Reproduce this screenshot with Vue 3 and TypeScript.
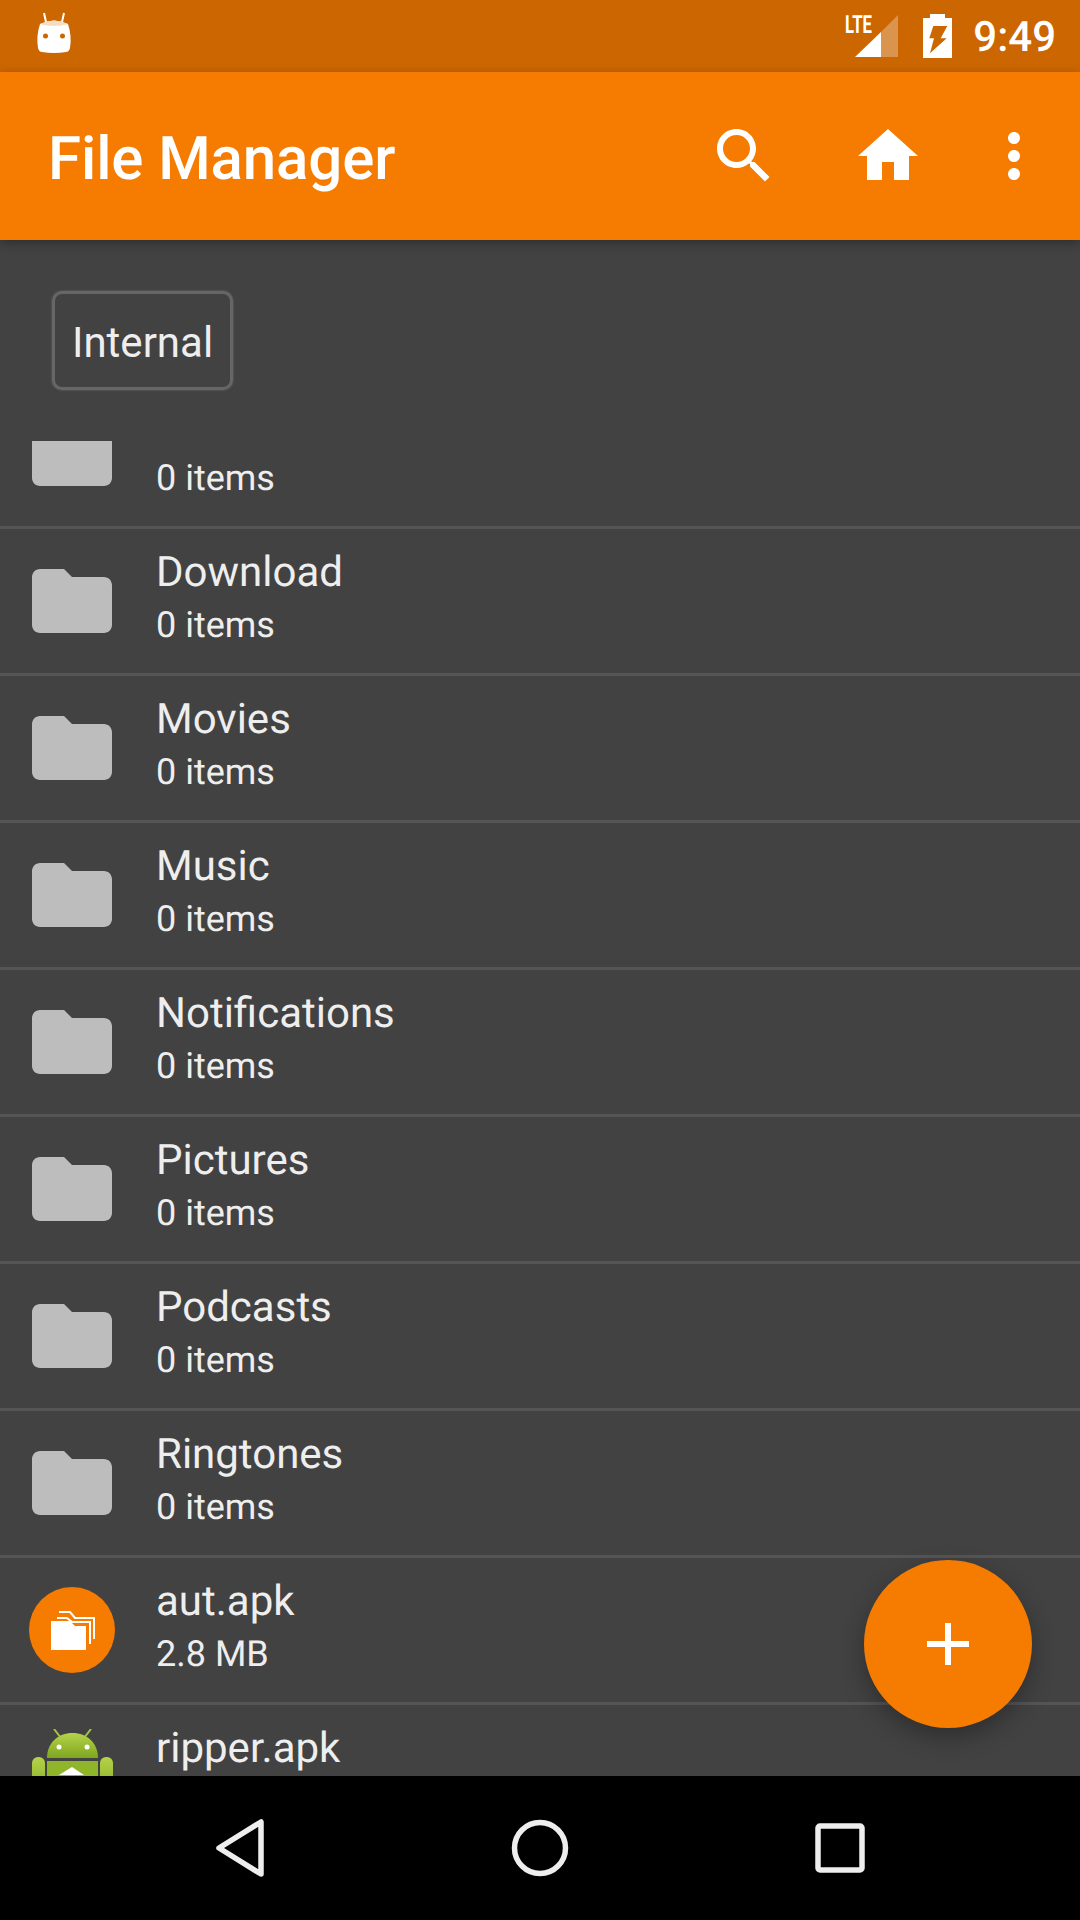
<script setup lang="ts">
interface Entry {
  name: string;
  info: string;
  kind: "folder" | "aut" | "android";
}

const folders = ["Alarms", "Download", "Movies", "Music", "Notifications", "Pictures", "Podcasts", "Ringtones"];

const entries: Entry[] = [
  ...folders.map((name): Entry => ({ name, info: "0 items", kind: "folder" })),
  { name: "aut.apk", info: "2.8 MB", kind: "aut" },
  { name: "ripper.apk", info: "", kind: "android" },
];
</script>

<template>
  <div class="phone">
    <!-- Status bar -->
    <header class="status-bar">
      <svg class="cat" width="36" height="72" viewBox="36 0 36 72">
        <path d="M44 13 46 22M64 13 62 22" stroke="#fff" stroke-width="2" fill="none" />
        <path d="M40 24Q54 17 68 24Q72 36 70 48Q69 52 66 52Q54 54 42 52Q39 52 38 48Q36 36 40 24Z" fill="#fff" />
        <path d="M40 24Q54 17 68 24Q54 28 40 24Z" fill="#f5dcc4" />
        <circle cx="45.5" cy="36" r="2.5" fill="#cc6600" />
        <circle cx="62.5" cy="36" r="2.5" fill="#cc6600" />
      </svg>
      <span class="status-spacer"></span>
      <svg class="signal" width="53" height="72" viewBox="845 0 53 72">
        <text x="845" y="33" class="lte" textLength="27" lengthAdjust="spacingAndGlyphs">LTE</text>
        <path d="M855 57 881 32V57Z" fill="#fff" />
        <path d="M881 32 898 15V57H881Z" fill="#fff" fill-opacity="0.3" />
      </svg>
      <svg class="battery" width="29" height="44" viewBox="0 0 29 44">
        <path
          fill="#fff"
          fill-rule="evenodd"
          d="M7 0H22V4H29V44H0V4H7ZM10.3 12H24.3L17.7 24.3H23.7L7 39.3 11 24.3H6.3Z"
        />
      </svg>
      <span class="clock">9:49</span>
    </header>

    <!-- Toolbar -->
    <div class="toolbar">
      <h1 class="title">File Manager</h1>
      <svg class="tool search" width="72" height="72" viewBox="0 0 24 24">
        <path
          d="M15.5 14h-.79l-.28-.27C15.41 12.59 16 11.11 16 9.5 16 5.91 13.09 3 9.5 3S3 5.91 3 9.5 5.91 16 9.5 16c1.61 0 3.09-.59 4.23-1.57l.27.28v.79l5 4.99L20.49 19l-4.99-5zm-6 0C7.01 14 5 11.99 5 9.5S7.01 5 9.5 5 14 7.01 14 9.5 11.99 14 9.5 14z"
        />
      </svg>
      <svg class="tool home" width="72" height="72" viewBox="0 0 24 24">
        <path d="M10 20v-6h4v6h5v-8h3L12 3 2 12h3v8z" />
      </svg>
      <svg class="tool more" width="72" height="72" viewBox="0 0 24 24">
        <path
          d="M12 8c1.1 0 2-.9 2-2s-.9-2-2-2-2 .9-2 2 .9 2 2 2zm0 2c-1.1 0-2 .9-2 2s.9 2 2 2 2-.9 2-2-.9-2-2-2zm0 6c-1.1 0-2 .9-2 2s.9 2 2 2 2-.9 2-2-.9-2-2-2z"
        />
      </svg>
    </div>

    <main class="content">
      <div class="crumbs">
        <button class="crumb">Internal</button>
      </div>

      <div class="list">
        <div class="list-inner">
          <div v-for="entry in entries" :key="entry.name" class="row">
            <svg v-if="entry.kind === 'folder'" class="thumb" width="96" height="96" viewBox="0 0 24 24">
              <path
                fill="#bdbdbd"
                d="M10 4H4c-1.1 0-2 .9-2 2v12c0 1.1.9 2 2 2h16c1.1 0 2-.9 2-2V8c0-1.1-.9-2-2-2h-8l-2-2z"
              />
            </svg>

            <svg v-else-if="entry.kind === 'aut'" class="thumb" width="96" height="96" viewBox="24 1582 96 96">
              <circle cx="72" cy="1630" r="43" fill="#f57c00" />
              <path d="M51 1621H70L75 1626H86V1650H51Z" fill="#fff" />
              <path d="M57 1618H67L72 1622H90V1644" fill="none" stroke="#fff" stroke-width="2" />
              <path d="M59 1612H70L75 1618H94V1639" fill="none" stroke="#fff" stroke-width="2" />
            </svg>

            <svg v-else class="thumb" width="96" height="96" viewBox="0 0 96 96">
              <defs>
                <linearGradient id="droid" x1="0" y1="0" x2="0" y2="1">
                  <stop offset="0" stop-color="#b5d34a" />
                  <stop offset="1" stop-color="#7fa61f" />
                </linearGradient>
              </defs>
              <path d="M30 0 37 9M67 0 60 9" stroke="#a4c639" stroke-width="2" />
              <path d="M23 29C23 14 34 4 48.5 4S74 14 74 29Z" fill="url(#droid)" />
              <circle cx="35" cy="18" r="2.5" fill="#fff" />
              <circle cx="63" cy="18" r="2.5" fill="#fff" />
              <rect x="8" y="28" width="13" height="40" rx="6" fill="url(#droid)" />
              <rect x="76" y="28" width="13" height="40" rx="6" fill="url(#droid)" />
              <rect x="23" y="32" width="51" height="40" fill="#8fb52b" />
              <path d="M48 38 60 46H35Z" fill="#fff" />
            </svg>

            <div class="text">
              <div class="name">{{ entry.name }}</div>
              <div class="info">{{ entry.info }}</div>
            </div>
          </div>
        </div>
      </div>

      <button class="fab">
        <svg width="42" height="42" viewBox="0 0 42 42">
          <path d="M18 0H24V18H42V24H24V42H18V24H0V18H18Z" fill="#fff" />
        </svg>
      </button>
    </main>

    <!-- Navigation bar -->
    <nav class="nav-bar">
      <svg width="144" height="72" viewBox="0 0 144 72">
        <path d="M93 10V62L51 36Z" class="nav-shape" />
      </svg>
      <svg width="144" height="72" viewBox="0 0 144 72">
        <circle cx="72" cy="36" r="25.5" class="nav-shape" />
      </svg>
      <svg width="144" height="72" viewBox="0 0 144 72">
        <rect x="50" y="14" width="44" height="44" rx="2" class="nav-shape" />
      </svg>
    </nav>
  </div>
</template>

<style scoped>
.phone {
  width: 1080px;
  height: 1920px;
  display: flex;
  flex-direction: column;
  background: #424242;
  font-family: Roboto, "Noto Sans", sans-serif;
  text-rendering: geometricPrecision;
  overflow: hidden;
}

.status-bar {
  height: 72px;
  flex: none;
  display: flex;
  align-items: center;
  padding: 0 24px 0 36px;
  background: #cc6600;
  box-sizing: border-box;
}

.status-spacer {
  flex: 1;
}

.lte {
  font-family: Roboto, sans-serif;
  font-size: 25px;
  font-weight: 700;
  fill: #fff;
}

.battery {
  margin-left: 25px;
}

.clock {
  margin-left: 21px;
  padding-top: 2px;
  color: #fff;
  font-size: 42px;
  font-weight: 500;
}

.toolbar {
  height: 168px;
  flex: none;
  display: flex;
  align-items: center;
  padding: 0 30px 0 48px;
  background: #f57c00;
  box-shadow: 0 3px 10px rgba(0, 0, 0, 0.3);
  position: relative;
  z-index: 2;
  box-sizing: border-box;
}

.title {
  flex: 1;
  margin: 0;
  padding-top: 5px;
  color: #fff;
  font-size: 60px;
  font-weight: 500;
  letter-spacing: -0.1px;
}

.tool {
  fill: #fff;
}

.home {
  margin-left: 72px;
}

.more {
  margin-left: 54px;
}

.content {
  flex: 1;
  min-height: 0;
  display: flex;
  flex-direction: column;
  position: relative;
}

.crumbs {
  height: 201px;
  flex: none;
  padding: 51px 0 0 52px;
  box-sizing: border-box;
}

.crumb {
  height: 99px;
  padding: 3px 17px 0;
  border: 3px solid #666666;
  border-radius: 10px;
  background: transparent;
  box-shadow: 0 0 2px #777777;
  color: #eeeeee;
  font-family: inherit;
  font-size: 42px;
}

.list {
  flex: 1;
  min-height: 0;
  overflow: hidden;
}

.list-inner {
  margin-top: -59px;
}

.row {
  height: 147px;
  display: flex;
  align-items: center;
  padding-left: 24px;
  border-bottom: 3px solid #555555;
  box-sizing: border-box;
}

.thumb {
  flex: none;
}

.text {
  margin-left: 36px;
  align-self: flex-start;
  padding-top: 18px;
  color: #eeeeee;
}

.name {
  font-size: 42px;
  line-height: 52px;
}

.info {
  font-size: 36px;
  line-height: 52px;
  min-height: 52px;
}

.fab {
  position: absolute;
  right: 48px;
  bottom: 48px;
  width: 168px;
  height: 168px;
  display: flex;
  align-items: center;
  justify-content: center;
  padding: 0;
  border: none;
  border-radius: 50%;
  background: #f57c00;
  box-shadow: 0 9px 24px rgba(0, 0, 0, 0.3);
}

.nav-bar {
  height: 144px;
  flex: none;
  display: flex;
  align-items: center;
  justify-content: center;
  gap: 156px;
  background: #000;
}

.nav-shape {
  fill: none;
  stroke: #eeeeee;
  stroke-width: 5.5px;
  stroke-linejoin: round;
}
</style>

<style>
html,
body {
  margin: 0;
  background: #424242;
}
</style>
